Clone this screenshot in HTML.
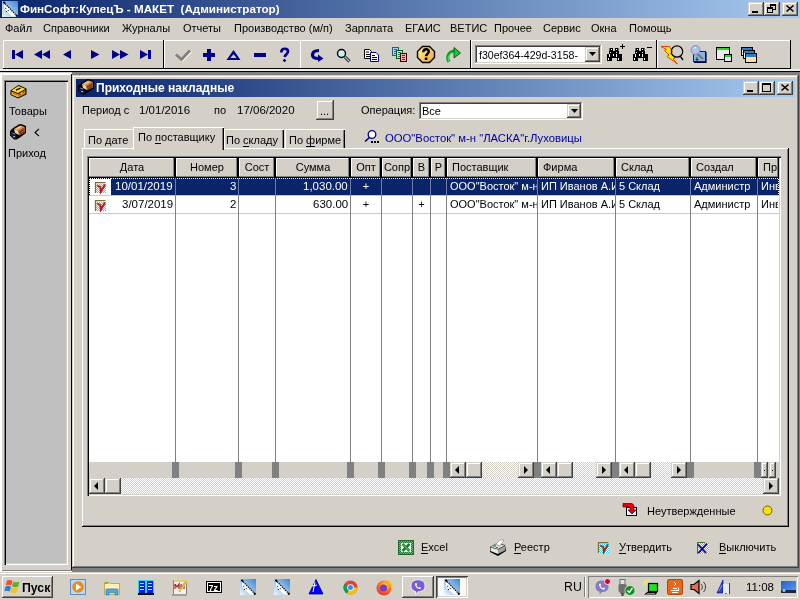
<!DOCTYPE html>
<html><head><meta charset="utf-8">
<style>
*{box-sizing:border-box;margin:0;padding:0}
html,body{width:800px;height:600px;overflow:hidden;background:#D4D0C8;font-family:"Liberation Sans",sans-serif;font-size:11px;color:#000}
.a{position:absolute}
.t{position:absolute;white-space:pre;font-size:11px;line-height:13px;will-change:transform}
.r{box-shadow:inset -1px -1px #404040,inset 1px 1px #fff,inset -2px -2px #808080,inset 2px 2px #D4D0C8;background:#D4D0C8}
.r1{box-shadow:inset -1px -1px #404040,inset 1px 1px #D4D0C8,inset -2px -2px #808080,inset 2px 2px #fff;background:#D4D0C8}
.s{box-shadow:inset -1px -1px #fff,inset 1px 1px #808080,inset -2px -2px #D4D0C8,inset 2px 2px #404040}
.tb{box-shadow:inset -1px -1px #000,inset 1px 1px #fff}
svg{position:absolute;overflow:visible}
u{text-decoration:none;border-bottom:1px solid #000}
</style></head><body>
<svg width="0" height="0" style="position:absolute"><defs>
<symbol id="plane" viewBox="0 0 16 16">
<linearGradient id="plg" x1="1" y1="0" x2="0" y2="1"><stop offset="0" stop-color="#3A86D4"/><stop offset="1" stop-color="#F0F8FF"/></linearGradient>
<rect width="16" height="16" fill="url(#plg)"/>
<path d="M1.5 1.5L15.5 15.5H10L4 10L2 7Z" fill="#fff"/>
<path d="M1.5 1L15.5 15.5" stroke="#000" stroke-width="1.2" stroke-dasharray="1.3 1"/>
<path d="M14 14L15.5 15.5M1.5 1L3 2.5" stroke="#000" stroke-width="1.8"/>
<path d="M3 7L5 8M4 10.5H6M6 9L7 11" stroke="#000" stroke-width="0.9" stroke-dasharray="1 1"/>
</symbol>
<symbol id="truck" viewBox="0 0 16 16">
<path d="M3 4L9.5 0L12.5 0.5L16 2V9L10 13.5L6.5 15.5H4L0 11.5V7L2 5Z" fill="#000"/>
<path d="M4 5L10 1.5L15 3L8.5 7Z" fill="#D89860"/>
<path d="M5 5L10 2L12 2.6L7 5.8Z" fill="#F0C088"/>
<path d="M4 5L8.5 7L9 11L5 9Z" fill="#F8D0A0"/>
<path d="M8.5 7L15 3V8.5L9 11.5Z" fill="#A86030"/>
<path d="M9 8.5L14.5 5.2M9.5 10.5L14.5 7.3" stroke="#601808" stroke-width="0.9"/>
<path d="M1 8L5 9L7 13.5L6 14.5H4L1 11.5Z" fill="#141A48"/>
<path d="M2.5 9.2L5 10" stroke="#7888D8" stroke-width="0.9"/>
<rect x="3.5" y="12" width="1.2" height="1.2" fill="#fff"/>
</symbol>
<symbol id="box" viewBox="0 0 17 15">
<path d="M0.5 6.5L8.5 1L16.5 4.5V10.5L8 14.5L0.5 11Z" fill="#000"/>
<path d="M1.5 6.5L8.5 2L15.5 5L8 9Z" fill="#FFD820"/>
<path d="M1.5 7.5L8 10V13.5L1.5 10.5Z" fill="#F8C010"/>
<path d="M8 10L15.5 6V10L8 13.5Z" fill="#D08018"/>
<path d="M6 6.2L10.5 4.2" stroke="#000" stroke-width="1.3"/>
<path d="M2.5 9L7.5 11M8.5 11L14.5 8" stroke="#904000" stroke-width="0.8"/>
<path d="M11 9.5L12.5 8.8" stroke="#FFF0D0" stroke-width="1"/>
</symbol>
</defs></svg>

<!-- main title bar -->
<div class="a" style="left:0;top:0;width:800px;height:18px;background:linear-gradient(to right,#0A246A,#A6CAF0)"></div>
<div class="t" style="left:20px;top:2px;font-size:11.65px;font-weight:bold;color:#fff;line-height:14px">ФинСофт:КупецЪ - МАКЕТ  (Администратор)</div>

<!-- menu -->
<div class="t" style="left:5px;top:22px">Файл</div>
<div class="t" style="left:43px;top:22px">Справочники</div>
<div class="t" style="left:122px;top:22px">Журналы</div>
<div class="t" style="left:183px;top:22px">Отчеты</div>
<div class="t" style="left:234px;top:22px">Производство (м/п)</div>
<div class="t" style="left:345px;top:22px">Зарплата</div>
<div class="t" style="left:405px;top:22px">ЕГАИС</div>
<div class="t" style="left:450px;top:22px">ВЕТИС</div>
<div class="t" style="left:494px;top:22px">Прочее</div>
<div class="t" style="left:543px;top:22px">Сервис</div>
<div class="t" style="left:591px;top:22px">Окна</div>
<div class="t" style="left:629px;top:22px">Помощь</div>

<!-- toolbars -->
<div class="a tb" style="left:3px;top:40px;width:161px;height:29px"></div>
<div class="a" style="left:164px;top:40px;width:136px;height:29px;box-shadow:inset 0 -1px #000,inset 1px 1px #fff"></div>
<div class="a tb" style="left:300px;top:40px;width:171px;height:29px"></div>
<div class="a tb" style="left:471px;top:40px;width:186px;height:29px"></div>
<div class="a tb" style="left:657px;top:40px;width:134px;height:29px"></div>


<!-- caption buttons main -->
<div class="a r1" style="left:748px;top:2px;width:16px;height:14px"></div>
<div class="a" style="left:752px;top:11px;width:6px;height:2px;background:#000"></div>
<div class="a r1" style="left:764px;top:2px;width:16px;height:14px"></div>
<div class="a" style="left:770px;top:4px;width:6px;height:6px;border:1px solid #000;border-top-width:2px"></div>
<div class="a" style="left:767px;top:7px;width:6px;height:6px;border:1px solid #000;border-top-width:2px;background:#D4D0C8"></div>
<div class="a r1" style="left:782px;top:2px;width:16px;height:14px"></div>
<svg style="left:786px;top:5px" width="8" height="7"><path d="M0.5 0.5L7.5 6.5M7.5 0.5L0.5 6.5" stroke="#000" stroke-width="1.6"/></svg>
<!-- app icon -->
<svg style="left:2px;top:1px" width="16" height="16"><use href="#plane"/></svg>

<!-- toolbar 1 icons -->
<svg style="left:0;top:0" width="800" height="70">
<g fill="#000088">
<rect x="12" y="50" width="3" height="9"/><path d="M15 54.5L23 50V59Z"/>
<path d="M34 54.5L42 50V59Z"/><path d="M42 54.5L50 50V59Z"/>
<path d="M63 54.5L71 50V59Z"/>
<path d="M91 50V59L99.5 54.5Z"/>
<path d="M112 50V59L120 54.5Z"/><path d="M120 50V59L128.5 54.5Z"/>
<path d="M140 50V59L148 54.5Z"/><rect x="148" y="50" width="3" height="9"/>
</g>
<path d="M176 54.5L181.5 59.5L190 50.5" stroke="#fff" stroke-width="2.6" fill="none" transform="translate(0.8,0.8)"/>
<path d="M176 54.5L181.5 59.5L190 50.5" stroke="#808080" stroke-width="2.8" fill="none"/>
<g fill="#000088">
<rect x="207" y="49" width="4" height="12"/><rect x="203" y="53" width="12" height="4"/>
<path d="M233.5 50L240.5 60H226.5Z M233.5 54.2L230.3 58H236.7Z" fill-rule="evenodd"/>
<rect x="254" y="53" width="12" height="4"/>
</g>
<path d="M281.3 52.5C281.3 49.8 282.8 48.8 284.8 48.8C286.8 48.8 288 50 288 51.6C288 53.8 285 54.5 284.6 57" stroke="#000088" stroke-width="2.6" fill="none"/><path d="M284.5 58.8L286.3 60.5L284.5 62.2L282.7 60.5Z" fill="#000088"/>
</svg>


<!-- toolbar 2-4 icons -->
<svg style="left:0;top:0" width="800" height="70">
<path d="M319 50.5C314 50.5 312.5 53 312.5 55C312.5 57.5 315 58.5 318 58.5" stroke="#000088" stroke-width="3.2" fill="none"/>
<path d="M318 54.5L323.5 58.5L318 62Z" fill="#000088"/>
<line x1="345" y1="57" x2="349.5" y2="61.5" stroke="#000" stroke-width="3"/>
<line x1="345" y1="57" x2="349.5" y2="61.5" stroke="#9ED8F0" stroke-width="1.2"/>
<circle cx="341.5" cy="53.5" r="4" fill="#C8F0FA" stroke="#000" stroke-width="1.4"/>
<path d="M364.5 49.5H369.5L371.5 51.5V58.5H364.5Z" fill="#fff" stroke="#000"/>
<path d="M366 52h3M366 54.5h4M366 56.5h4" stroke="#000"/>
<path d="M370.5 52.5H376L378.5 55V61.5H370.5Z" fill="#fff" stroke="#000088"/>
<path d="M372 55.5h3M372 57.5h5M372 59.5h5" stroke="#000"/>
<rect x="392.5" y="47.5" width="6" height="8" fill="#A8D0F0" stroke="#2A5A80"/>
<path d="M394 49.5h3M394 51.5h3M394 53.5h3" stroke="#2A70B0" stroke-width="1"/>
<rect x="396.5" y="50.5" width="6" height="8" fill="#B8F0B8" stroke="#0A5A20"/>
<path d="M398 52.5h3M398 54.5h3M398 56.5h3" stroke="#208040" stroke-width="1"/>
<rect x="400.5" y="53.5" width="6" height="8" fill="#F8B0B0" stroke="#400000"/>
<path d="M402 55.5h3M402 57.5h3M402 59.5h3" stroke="#A01010" stroke-width="1"/>
<defs><linearGradient id="octg" x1="0" y1="0" x2="1" y2="1"><stop offset="0" stop-color="#FFF8B0"/><stop offset="1" stop-color="#F0A030"/></linearGradient></defs>
<path d="M422.5 46.5H429.5L434.5 51.5V57.5L429.5 62.5H422.5L417.5 57.5V51.5Z" fill="url(#octg)" stroke="#000" stroke-width="1.4"/>
<path d="M423.3 52.3C423.3 50.3 424.5 49.3 426 49.3C427.8 49.3 428.8 50.3 428.8 51.6C428.8 53.5 426.2 54 426 56.2" stroke="#000" stroke-width="2.4" fill="none"/>
<rect x="424.8" y="57.5" width="2.5" height="2.5" fill="#000"/>
<path d="M449 62C446 57 448 51 456 51" stroke="#10A030" stroke-width="3" fill="none"/>
<path d="M449 62C447 58 448.5 53 455 52.5" stroke="#60E080" stroke-width="1" fill="none"/>
<path d="M454 47.5L460.5 53L454 58Z" fill="#20C040" stroke="#004000" stroke-width="0.8"/>
<g transform="translate(0,0)"><path d="M609.5 48H613V51H615V48H618.5V51H619V54H622V61H617V58H612V61H607V54H609V51H609.5Z" fill="#000"/>
<g fill="#fff"><rect x="611" y="49" width="1" height="1"/><rect x="616" y="49" width="1" height="1"/><rect x="610" y="52" width="1" height="1"/><rect x="616" y="52" width="1" height="1"/><rect x="609" y="54" width="1" height="3"/><rect x="613" y="54" width="1" height="2"/><rect x="616" y="54" width="1" height="3"/><rect x="608" y="58" width="1" height="2"/><rect x="618" y="58" width="1" height="2"/></g></g>
<path d="M620 46.5H625M622.5 44V49" stroke="#000" stroke-width="1"/>
<g transform="translate(26,0)"><path d="M609.5 48H613V51H615V48H618.5V51H619V54H622V61H617V58H612V61H607V54H609V51H609.5Z" fill="#000"/>
<g fill="#fff"><rect x="611" y="49" width="1" height="1"/><rect x="616" y="49" width="1" height="1"/><rect x="610" y="52" width="1" height="1"/><rect x="616" y="52" width="1" height="1"/><rect x="609" y="54" width="1" height="3"/><rect x="613" y="54" width="1" height="2"/><rect x="616" y="54" width="1" height="3"/><rect x="608" y="58" width="1" height="2"/><rect x="618" y="58" width="1" height="2"/></g></g>
<path d="M647 47.5H652" stroke="#000" stroke-width="1"/>
<path d="M661 46.5H669.5L672.5 52L670.5 53.5L675 58L673 59L677.5 64L667 56.5L669 55L664.5 50.5L666.5 49.5Z" fill="#FFE800" stroke="#E83000" stroke-width="0.9"/>
<circle cx="677" cy="51.5" r="5.7" fill="none" stroke="#000" stroke-width="1.2"/>
<path d="M680.5 56.5L683 60" stroke="#000" stroke-width="1.3"/>
<rect x="693.5" y="51.5" width="12" height="10" fill="#80B8E8" stroke="#102060"/>
<path d="M706 52V62.5H694" stroke="#000040" stroke-width="1.2" fill="none"/>
<path d="M697 57V61M695.5 59.5h3" stroke="#203040" stroke-width="1"/>
<line x1="697.5" y1="54" x2="703" y2="59" stroke="#907050" stroke-width="2.2"/>
<circle cx="695.5" cy="50" r="4.5" fill="#B0C0E8" stroke="#7080B8" stroke-width="0.8"/>
<path d="M693.5 49A2.5 2.5 0 0 1 696 47.5" stroke="#fff" stroke-width="0.8" fill="none"/>
<rect x="716.5" y="47.5" width="13" height="12" fill="#EEE" stroke="#000"/>
<rect x="717" y="48" width="12" height="2" fill="#30D030"/>
<rect x="724.5" y="54.5" width="7" height="7" fill="#E8E8F0" stroke="#000"/>
<rect x="725" y="55" width="6" height="2" fill="#30D030"/>
<rect x="741.5" y="47.5" width="11" height="8" fill="#FFF0D8" stroke="#000"/>
<rect x="742" y="48" width="10" height="2" fill="#3080C0"/>
<rect x="743.5" y="50.5" width="11" height="8" fill="#FFF0D8" stroke="#000"/>
<rect x="744" y="51" width="10" height="2" fill="#3080C0"/>
<rect x="745.5" y="53.5" width="11" height="9" fill="#FFE0A8" stroke="#000"/>
<rect x="746" y="54" width="10" height="3" fill="#3080C0"/>
</svg>
<!-- combo on toolbar -->
<div class="a s" style="left:475px;top:45px;width:127px;height:19px;background:#fff"></div>
<div class="t" style="left:478.5px;top:49px;font-size:10.6px;width:106px;overflow:hidden">f30ef364-429d-3158-</div>
<div class="a r1" style="left:585px;top:47px;width:15px;height:15px"></div>
<svg style="left:589px;top:52px" width="7" height="4"><path d="M0 0H7L3.5 4Z" fill="#000"/></svg>

<!-- MDI lines -->
<div class="a" style="left:0;top:69px;width:800px;height:2px;background:#F0EEEA"></div>
<div class="a" style="left:0;top:71px;width:800px;height:1px;background:#000"></div>
<div class="a" style="left:0;top:72px;width:800px;height:1px;background:#808080"></div>

<!-- left panel -->
<div class="a" style="left:0;top:72px;width:72px;height:500px;background:#D4D0C8;box-shadow:inset 0 1px #D4D0C8,inset 0 3px #fff,inset 2px 0 #fff,inset 1px 0 #D4D0C8,inset 0 -1px #fff,inset 0 -2px #808080"></div>
<div class="a" style="left:4px;top:80px;width:64px;height:485px;background:#C0C0C0;box-shadow:inset 1px 1px #808080,inset 2px 2px #000,inset -1px -1px #fff,inset -2px -2px #D4D0C8"></div>

<!-- child window -->
<div class="a" style="left:71px;top:74px;width:1px;height:496px;background:#000"></div>
<div class="a" style="left:72px;top:75px;width:727px;height:493px;background:#D4D0C8;box-shadow:inset -1px -1px #404040,inset 1px 1px #D4D0C8,inset -2px -2px #808080,inset 2px 2px #fff"></div>
<div class="a" style="left:72px;top:568px;width:728px;height:4px;background:#808080"></div>
<div class="a" style="left:799px;top:72px;width:1px;height:500px;background:#808080"></div>
<div class="a" style="left:72px;top:72px;width:728px;height:3px;background:#808080"></div>
<div class="a" style="left:76px;top:79px;width:719px;height:18px;background:linear-gradient(to right,#0A246A,#A6CAF0)"></div>
<svg style="left:78px;top:79px" width="16" height="16"><use href="#truck"/></svg>
<div class="t" style="left:96px;top:81px;font-size:12px;font-weight:bold;color:#fff;line-height:14px">Приходные накладные</div>


<!-- child caption buttons -->
<div class="a r1" style="left:743px;top:81px;width:16px;height:14px"></div>
<div class="a" style="left:747px;top:90px;width:6px;height:2px;background:#000"></div>
<div class="a r1" style="left:759px;top:81px;width:16px;height:14px"></div>
<div class="a" style="left:762px;top:83px;width:9px;height:9px;border:1px solid #000;border-top-width:2px"></div>
<div class="a r1" style="left:777px;top:81px;width:16px;height:14px"></div>
<svg style="left:781px;top:84px" width="8" height="7"><path d="M0.5 0.5L7.5 6.5M7.5 0.5L0.5 6.5" stroke="#000" stroke-width="1.6"/></svg>

<!-- period row -->
<div class="t" style="left:82px;top:104px">Период с</div>
<div class="t" style="left:139px;top:104px;font-size:11.5px">1/01/2016</div>
<div class="t" style="left:214px;top:104px">по</div>
<div class="t" style="left:237px;top:104px;font-size:11.5px">17/06/2020</div>
<div class="a r1" style="left:316px;top:100px;width:18px;height:20px"></div>
<div class="t" style="left:320px;top:105px">...</div>
<div class="t" style="left:361px;top:104px">Операция:</div>
<div class="a s" style="left:419px;top:102px;width:164px;height:18px;background:#fff"></div>
<div class="t" style="left:422px;top:105px">Все</div>
<div class="a r1" style="left:567px;top:104px;width:14px;height:14px"></div>
<svg style="left:571px;top:109px" width="7" height="4"><path d="M0 0H7L3.5 4Z" fill="#000"/></svg>

<!-- tab panel -->
<div class="a" style="left:82px;top:148px;width:707px;height:379px;box-shadow:inset -1px -1px #000,inset 1px 1px #fff,inset -2px -2px #808080"></div>
<!-- tabs -->
<div class="a" style="left:84px;top:129px;width:49px;height:19px;background:#D4D0C8;box-shadow:inset 1px 1px #fff"></div>
<div class="a" style="left:224px;top:129px;width:60px;height:19px;background:#D4D0C8;box-shadow:inset 1px 1px #fff,inset -1px 0 #000,inset -2px 0 #808080"></div>
<div class="a" style="left:285px;top:129px;width:60px;height:19px;background:#D4D0C8;box-shadow:inset 1px 1px #fff,inset -1px 0 #000,inset -2px 0 #808080"></div>
<div class="a" style="left:133px;top:127px;width:91px;height:23px;background:#D4D0C8;box-shadow:inset 1px 1px #fff,inset -1px 0 #000,inset -2px 0 #808080"></div>
<div class="t" style="left:88px;top:134px">По дате</div>
<div class="t" style="left:138px;top:131px">По <u>п</u>оставщику</div>
<div class="t" style="left:226px;top:134px">По <u>с</u>кладу</div>
<div class="t" style="left:289px;top:134px">По <u>ф</u>ирме</div>
<svg style="left:364px;top:130px" width="15" height="13"><circle cx="8" cy="4.5" r="3.8" fill="#fff" stroke="#00008B" stroke-width="1.3"/><path d="M5.5 7.5L1 11.5" stroke="#00008B" stroke-width="1.6"/><rect x="7" y="11" width="2" height="2" fill="#000"/><rect x="10" y="11" width="2" height="2" fill="#000"/><rect x="13" y="11" width="2" height="2" fill="#000"/></svg>
<div class="t" style="left:385px;top:132px;color:#0000A0;font-size:11.3px">ООО"Восток" м-н "ЛАСКА"г.Луховицы</div>

<!-- grid start -->
<div class="a" style="left:87px;top:156px;width:694px;height:340px;background:#fff;box-shadow:inset 1px 1px #808080,inset 2px 2px #000,inset -1px -1px #fff,inset -2px -2px #D4D0C8"></div>
<div class="a" style="left:89px;top:158px;width:87px;height:20px;overflow:hidden;background:#D4D0C8;box-shadow:inset -2px 0 #000,inset 0 -1px #000,inset -3px 0 #808080,inset 0 -2px #808080,inset 1px 1px #fff">
<div class="t" style="left:0;width:86px;text-align:center;top:3px">Дата</div></div>
<div class="a" style="left:176px;top:158px;width:63px;height:20px;overflow:hidden;background:#D4D0C8;box-shadow:inset -2px 0 #000,inset 0 -1px #000,inset -3px 0 #808080,inset 0 -2px #808080,inset 1px 1px #fff">
<div class="t" style="left:0;width:62px;text-align:center;top:3px">Номер</div></div>
<div class="a" style="left:239px;top:158px;width:37px;height:20px;overflow:hidden;background:#D4D0C8;box-shadow:inset -2px 0 #000,inset 0 -1px #000,inset -3px 0 #808080,inset 0 -2px #808080,inset 1px 1px #fff">
<div class="t" style="left:0;width:36px;text-align:center;top:3px">Сост</div></div>
<div class="a" style="left:276px;top:158px;width:75px;height:20px;overflow:hidden;background:#D4D0C8;box-shadow:inset -2px 0 #000,inset 0 -1px #000,inset -3px 0 #808080,inset 0 -2px #808080,inset 1px 1px #fff">
<div class="t" style="left:0;width:74px;text-align:center;top:3px">Сумма</div></div>
<div class="a" style="left:351px;top:158px;width:31px;height:20px;overflow:hidden;background:#D4D0C8;box-shadow:inset -2px 0 #000,inset 0 -1px #000,inset -3px 0 #808080,inset 0 -2px #808080,inset 1px 1px #fff">
<div class="t" style="left:0;width:30px;text-align:center;top:3px">Опт</div></div>
<div class="a" style="left:382px;top:158px;width:31px;height:20px;overflow:hidden;background:#D4D0C8;box-shadow:inset -2px 0 #000,inset 0 -1px #000,inset -3px 0 #808080,inset 0 -2px #808080,inset 1px 1px #fff">
<div class="t" style="left:0;width:30px;text-align:center;top:3px">Сопр</div></div>
<div class="a" style="left:413px;top:158px;width:18px;height:20px;overflow:hidden;background:#D4D0C8;box-shadow:inset -2px 0 #000,inset 0 -1px #000,inset -3px 0 #808080,inset 0 -2px #808080,inset 1px 1px #fff">
<div class="t" style="left:0;width:17px;text-align:center;top:3px">В</div></div>
<div class="a" style="left:431px;top:158px;width:16px;height:20px;overflow:hidden;background:#D4D0C8;box-shadow:inset -2px 0 #000,inset 0 -1px #000,inset -3px 0 #808080,inset 0 -2px #808080,inset 1px 1px #fff">
<div class="t" style="left:0;width:15px;text-align:center;top:3px">Р</div></div>
<div class="a" style="left:447px;top:158px;width:91px;height:20px;overflow:hidden;background:#D4D0C8;box-shadow:inset -2px 0 #000,inset 0 -1px #000,inset -3px 0 #808080,inset 0 -2px #808080,inset 1px 1px #fff">
<div class="t" style="left:5px;top:3px">Поставщик</div></div>
<div class="a" style="left:538px;top:158px;width:78px;height:20px;overflow:hidden;background:#D4D0C8;box-shadow:inset -2px 0 #000,inset 0 -1px #000,inset -3px 0 #808080,inset 0 -2px #808080,inset 1px 1px #fff">
<div class="t" style="left:5px;top:3px">Фирма</div></div>
<div class="a" style="left:616px;top:158px;width:75px;height:20px;overflow:hidden;background:#D4D0C8;box-shadow:inset -2px 0 #000,inset 0 -1px #000,inset -3px 0 #808080,inset 0 -2px #808080,inset 1px 1px #fff">
<div class="t" style="left:5px;top:3px">Склад</div></div>
<div class="a" style="left:691px;top:158px;width:67px;height:20px;overflow:hidden;background:#D4D0C8;box-shadow:inset -2px 0 #000,inset 0 -1px #000,inset -3px 0 #808080,inset 0 -2px #808080,inset 1px 1px #fff">
<div class="t" style="left:5px;top:3px">Создал</div></div>
<div class="a" style="left:758px;top:158px;width:21px;height:20px;overflow:hidden;background:#D4D0C8;box-shadow:inset -1px 0 #000,inset 0 -1px #000,inset -2px 0 #808080,inset 0 -2px #808080,inset 1px 1px #fff">
<div class="t" style="left:5px;top:3px">Пр</div></div>
<div class="a" style="left:111px;top:179px;width:668px;height:16px;background:#0A246A"></div>
<div class="a" style="left:89px;top:178px;width:690px;height:1px;background:repeating-linear-gradient(to right,#000 0 1px,#fff 1px 2px)"></div>
<div class="a" style="left:111px;top:178px;width:667px;height:1px;background:repeating-linear-gradient(to right,#fff 0 1px,#0A246A 1px 2px)"></div>
<div class="a" style="left:778px;top:178px;width:1px;height:17px;background:repeating-linear-gradient(to bottom,#000 0 1px,#fff 1px 2px)"></div>
<div class="a" style="left:776px;top:462px;width:3px;height:16px;background:repeating-conic-gradient(#fff 0 25%,#D4D0C8 0 50%) 0 0/2px 2px"></div>
<div class="a" style="left:89px;top:178px;width:1px;height:17px;background:repeating-linear-gradient(to bottom,#000 0 1px,#fff 1px 2px)"></div>
<div class="a" style="left:89px;top:195px;width:690px;height:1px;background:#C8C8C8"></div>
<div class="a" style="left:89px;top:213px;width:690px;height:1px;background:#C8C8C8"></div>
<div class="a" style="left:175px;top:178px;width:1px;height:284px;background:#808080"></div>
<div class="a" style="left:175px;top:179px;width:1px;height:16px;background:#6A7CA8"></div>
<div class="a" style="left:238px;top:178px;width:1px;height:284px;background:#808080"></div>
<div class="a" style="left:238px;top:179px;width:1px;height:16px;background:#6A7CA8"></div>
<div class="a" style="left:275px;top:178px;width:1px;height:284px;background:#808080"></div>
<div class="a" style="left:275px;top:179px;width:1px;height:16px;background:#6A7CA8"></div>
<div class="a" style="left:350px;top:178px;width:1px;height:284px;background:#808080"></div>
<div class="a" style="left:350px;top:179px;width:1px;height:16px;background:#6A7CA8"></div>
<div class="a" style="left:381px;top:178px;width:1px;height:284px;background:#808080"></div>
<div class="a" style="left:381px;top:179px;width:1px;height:16px;background:#6A7CA8"></div>
<div class="a" style="left:412px;top:178px;width:1px;height:284px;background:#808080"></div>
<div class="a" style="left:412px;top:179px;width:1px;height:16px;background:#6A7CA8"></div>
<div class="a" style="left:430px;top:178px;width:1px;height:284px;background:#808080"></div>
<div class="a" style="left:430px;top:179px;width:1px;height:16px;background:#6A7CA8"></div>
<div class="a" style="left:446px;top:178px;width:1px;height:284px;background:#808080"></div>
<div class="a" style="left:446px;top:179px;width:1px;height:16px;background:#6A7CA8"></div>
<div class="a" style="left:537px;top:178px;width:1px;height:284px;background:#808080"></div>
<div class="a" style="left:537px;top:179px;width:1px;height:16px;background:#6A7CA8"></div>
<div class="a" style="left:615px;top:178px;width:1px;height:284px;background:#808080"></div>
<div class="a" style="left:615px;top:179px;width:1px;height:16px;background:#6A7CA8"></div>
<div class="a" style="left:690px;top:178px;width:1px;height:284px;background:#808080"></div>
<div class="a" style="left:690px;top:179px;width:1px;height:16px;background:#6A7CA8"></div>
<div class="a" style="left:757px;top:178px;width:1px;height:284px;background:#808080"></div>
<div class="a" style="left:757px;top:179px;width:1px;height:16px;background:#6A7CA8"></div>
<div class="a" style="left:89px;top:180px;width:86px;height:15px;overflow:hidden"><div class="t" style="right:2px;top:0;color:#fff;font-size:11.5px">10/01/2019</div></div>
<div class="a" style="left:176px;top:180px;width:62px;height:15px;overflow:hidden"><div class="t" style="right:2px;top:0;color:#fff;font-size:11.5px">3</div></div>
<div class="a" style="left:276px;top:180px;width:74px;height:15px;overflow:hidden"><div class="t" style="right:2px;top:0;color:#fff;font-size:11.5px">1,030.00</div></div>
<div class="a" style="left:351px;top:180px;width:30px;height:15px;overflow:hidden"><div class="t" style="left:0;width:30px;text-align:center;top:0;color:#fff;font-size:11px">+</div></div>
<div class="a" style="left:447px;top:180px;width:90px;height:15px;overflow:hidden"><div class="t" style="left:3px;top:0;color:#fff;font-size:11px">ООО"Восток" м-н "ЛАСКА"</div></div>
<div class="a" style="left:538px;top:180px;width:77px;height:15px;overflow:hidden"><div class="t" style="left:3px;top:0;color:#fff;font-size:11px">ИП Иванов А.И.</div></div>
<div class="a" style="left:616px;top:180px;width:74px;height:15px;overflow:hidden"><div class="t" style="left:3px;top:0;color:#fff;font-size:11px">5 Склад</div></div>
<div class="a" style="left:691px;top:180px;width:66px;height:15px;overflow:hidden"><div class="t" style="left:3px;top:0;color:#fff;font-size:11px">Администр</div></div>
<div class="a" style="left:758px;top:180px;width:20px;height:15px;overflow:hidden"><div class="t" style="left:3px;top:0;color:#fff;font-size:11px">Инвентаризация</div></div>
<div class="a" style="left:89px;top:198px;width:86px;height:15px;overflow:hidden"><div class="t" style="right:2px;top:0;color:#000;font-size:11.5px">3/07/2019</div></div>
<div class="a" style="left:176px;top:198px;width:62px;height:15px;overflow:hidden"><div class="t" style="right:2px;top:0;color:#000;font-size:11.5px">2</div></div>
<div class="a" style="left:276px;top:198px;width:74px;height:15px;overflow:hidden"><div class="t" style="right:2px;top:0;color:#000;font-size:11.5px">630.00</div></div>
<div class="a" style="left:351px;top:198px;width:30px;height:15px;overflow:hidden"><div class="t" style="left:0;width:30px;text-align:center;top:0;color:#000;font-size:11px">+</div></div>
<div class="a" style="left:413px;top:198px;width:17px;height:15px;overflow:hidden"><div class="t" style="left:0;width:17px;text-align:center;top:0;color:#000;font-size:11px">+</div></div>
<div class="a" style="left:447px;top:198px;width:90px;height:15px;overflow:hidden"><div class="t" style="left:3px;top:0;color:#000;font-size:11px">ООО"Восток" м-н "ЛАСКА"</div></div>
<div class="a" style="left:538px;top:198px;width:77px;height:15px;overflow:hidden"><div class="t" style="left:3px;top:0;color:#000;font-size:11px">ИП Иванов А.И.</div></div>
<div class="a" style="left:616px;top:198px;width:74px;height:15px;overflow:hidden"><div class="t" style="left:3px;top:0;color:#000;font-size:11px">5 Склад</div></div>
<div class="a" style="left:691px;top:198px;width:66px;height:15px;overflow:hidden"><div class="t" style="left:3px;top:0;color:#000;font-size:11px">Администр</div></div>
<div class="a" style="left:758px;top:198px;width:20px;height:15px;overflow:hidden"><div class="t" style="left:3px;top:0;color:#000;font-size:11px">Инвентаризация</div></div>
<svg style="left:95px;top:182px" width="11" height="11"><defs><pattern id="ck0" width="2" height="2" patternUnits="userSpaceOnUse"><rect width="2" height="2" fill="#fff"/><rect width="1" height="1" fill="#40D0E0"/><rect x="1" y="1" width="1" height="1" fill="#40D0E0"/></pattern></defs><rect x="1" y="2" width="10" height="9" fill="url(#ck0)"/><path d="M0.5 11V0.7H10.5" stroke="#807030" stroke-width="1.3" fill="none"/><path d="M2.3 3.5L5.3 5L5.8 9.8L10 2.5" stroke="#B81818" stroke-width="1.9" fill="none"/></svg>
<svg style="left:95px;top:200px" width="11" height="11"><defs><pattern id="ck1" width="2" height="2" patternUnits="userSpaceOnUse"><rect width="2" height="2" fill="#fff"/><rect width="1" height="1" fill="#40D0E0"/><rect x="1" y="1" width="1" height="1" fill="#40D0E0"/></pattern></defs><rect x="1" y="2" width="10" height="9" fill="url(#ck1)"/><path d="M0.5 11V0.7H10.5" stroke="#807030" stroke-width="1.3" fill="none"/><path d="M2.3 3.5L5.3 5L5.8 9.8L10 2.5" stroke="#B81818" stroke-width="1.9" fill="none"/></svg>
<div class="a" style="left:89px;top:462px;width:690px;height:16px;background:#D4D0C8"></div>
<div class="a" style="left:172px;top:462px;width:7px;height:16px;background:#808080"></div>
<div class="a" style="left:235px;top:462px;width:7px;height:16px;background:#808080"></div>
<div class="a" style="left:272px;top:462px;width:7px;height:16px;background:#808080"></div>
<div class="a" style="left:347px;top:462px;width:7px;height:16px;background:#808080"></div>
<div class="a" style="left:378px;top:462px;width:7px;height:16px;background:#808080"></div>
<div class="a" style="left:409px;top:462px;width:7px;height:16px;background:#808080"></div>
<div class="a" style="left:427px;top:462px;width:7px;height:16px;background:#808080"></div>
<div class="a" style="left:443px;top:462px;width:7px;height:16px;background:#808080"></div>
<div class="a" style="left:534px;top:462px;width:7px;height:16px;background:#808080"></div>
<div class="a" style="left:612px;top:462px;width:7px;height:16px;background:#808080"></div>
<div class="a" style="left:687px;top:462px;width:7px;height:16px;background:#808080"></div>
<div class="a" style="left:754px;top:462px;width:7px;height:16px;background:#808080"></div>
<div class="a" style="left:450px;top:462px;width:84px;height:16px;background:repeating-conic-gradient(#fff 0 25%,#D4D0C8 0 50%) 0 0/2px 2px"></div><div class="a r1" style="left:450px;top:462px;width:16px;height:16px"></div><svg style="left:455px;top:466px" width="4" height="8"><path d="M4 0V8L0 4Z" fill="#000"/></svg><div class="a r1" style="left:466px;top:462px;width:16px;height:16px"></div><div class="a r1" style="left:518px;top:462px;width:16px;height:16px"></div><svg style="left:524px;top:466px" width="4" height="8"><path d="M0 0V8L4 4Z" fill="#000"/></svg>
<div class="a" style="left:541px;top:462px;width:71px;height:16px;background:repeating-conic-gradient(#fff 0 25%,#D4D0C8 0 50%) 0 0/2px 2px"></div><div class="a r1" style="left:541px;top:462px;width:16px;height:16px"></div><svg style="left:546px;top:466px" width="4" height="8"><path d="M4 0V8L0 4Z" fill="#000"/></svg><div class="a r1" style="left:557px;top:462px;width:16px;height:16px"></div><div class="a r1" style="left:596px;top:462px;width:16px;height:16px"></div><svg style="left:602px;top:466px" width="4" height="8"><path d="M0 0V8L4 4Z" fill="#000"/></svg>
<div class="a" style="left:619px;top:462px;width:68px;height:16px;background:repeating-conic-gradient(#fff 0 25%,#D4D0C8 0 50%) 0 0/2px 2px"></div><div class="a r1" style="left:619px;top:462px;width:16px;height:16px"></div><svg style="left:624px;top:466px" width="4" height="8"><path d="M4 0V8L0 4Z" fill="#000"/></svg><div class="a r1" style="left:635px;top:462px;width:16px;height:16px"></div><div class="a r1" style="left:671px;top:462px;width:16px;height:16px"></div><svg style="left:677px;top:466px" width="4" height="8"><path d="M0 0V8L4 4Z" fill="#000"/></svg>
<div class="a r1" style="left:761px;top:462px;width:7px;height:16px"></div><div class="a" style="left:764px;top:470px;width:1px;height:1px;background:#000"></div>
<div class="a r1" style="left:769px;top:462px;width:7px;height:16px"></div><div class="a" style="left:772px;top:470px;width:1px;height:1px;background:#000"></div>
<div class="a" style="left:89px;top:478px;width:690px;height:16px;background:repeating-conic-gradient(#fff 0 25%,#D4D0C8 0 50%) 0 0/2px 2px"></div>
<div class="a r1" style="left:89px;top:478px;width:16px;height:16px"></div><svg style="left:94px;top:482px" width="4" height="8"><path d="M4 0V8L0 4Z" fill="#000"/></svg><div class="a r1" style="left:105px;top:478px;width:16px;height:16px"></div><div class="a r1" style="left:763px;top:478px;width:16px;height:16px"></div><svg style="left:769px;top:482px" width="4" height="8"><path d="M0 0V8L4 4Z" fill="#000"/></svg>
<!-- grid end -->

<!-- left panel content -->
<svg style="left:10px;top:84px" width="17" height="15"><use href="#box"/></svg>
<div class="t" style="left:9px;top:105px">Товары</div>
<svg style="left:10px;top:124px" width="16" height="16"><use href="#truck"/></svg>
<svg style="left:34px;top:128px" width="6" height="10"><path d="M5 0.8L1 4.5L5 8.2" stroke="#000" stroke-width="1.1" fill="none"/></svg>
<div class="t" style="left:8px;top:147px">Приход</div>

<!-- status row -->
<svg style="left:623px;top:503px" width="15" height="14">
<rect x="3.5" y="4.5" width="10" height="8" fill="#fff" stroke="#000"/>
<path d="M0 0.5H8C10 0.5 11 2 11 4V7H13L9 11L5 7H7V4H0Z" fill="#F00000" stroke="#200040" stroke-width="0.7"/>
</svg>
<div class="t" style="left:647px;top:505px">Неутвержденные</div>
<svg style="left:762px;top:505px" width="11" height="11"><circle cx="5.5" cy="5.5" r="4.5" fill="#F8E000" stroke="#806000" stroke-width="1"/></svg>

<!-- button row -->
<svg style="left:398px;top:540px" width="16" height="15">
<defs><pattern id="gck" width="2" height="2" patternUnits="userSpaceOnUse"><rect width="2" height="2" fill="#1E7A30"/><rect width="1" height="1" fill="#70B880"/><rect x="1" y="1" width="1" height="1" fill="#70B880"/></pattern></defs>
<rect x="0" y="0" width="16" height="15" fill="#1E6A2A"/>
<rect x="1" y="1" width="14" height="13" fill="url(#gck)"/>
<rect x="3" y="3" width="10" height="9" fill="#F0FFF0"/>
<path d="M4.5 4L11.5 11M11.5 4L4.5 11" stroke="#1E7A30" stroke-width="2.6"/>
<path d="M5 4.5L11 10.5" stroke="#C0E8C0" stroke-width="0.7"/>
</svg>
<div class="t" style="left:421px;top:541px"><u>E</u>xcel</div>
<svg style="left:488px;top:539px" width="20" height="18">
<path d="M2 8L9 4L17 6L18 12L10 17L2 13Z" fill="#000"/>
<path d="M2.5 8L9 4.5L17 6.5L10 10Z" fill="#D8D8D8"/>
<path d="M2.5 8.5L10 10.5V15L2.5 12Z" fill="#E8E8E8"/>
<path d="M10 10.5L17 7V11.5L10 15Z" fill="#A0A0A0"/>
<path d="M8 5L12 1H16L12 7Z" fill="#fff" stroke="#808080" stroke-width="0.6"/>
<rect x="5" y="6" width="3" height="2" fill="#40C060"/><rect x="8" y="8" width="2" height="1" fill="#C04040"/>
</svg>
<div class="t" style="left:514px;top:541px"><u>Р</u>еестр</div>
<svg style="left:598px;top:542px" width="11" height="11"><defs><pattern id="ck5" width="2" height="2" patternUnits="userSpaceOnUse"><rect width="2" height="2" fill="#fff"/><rect width="1" height="1" fill="#40D0E0"/><rect x="1" y="1" width="1" height="1" fill="#40D0E0"/></pattern></defs><rect x="1" y="2" width="10" height="9" fill="url(#ck5)"/><path d="M0.5 11V0.7H10.5" stroke="#807030" stroke-width="1.3" fill="none"/><path d="M2.3 3.5L5.3 5L5.8 9.8L10 2.5" stroke="#B81818" stroke-width="1.9" fill="none"/></svg>
<div class="t" style="left:619px;top:541px"><u>У</u>твердить</div>
<svg style="left:697px;top:542px" width="13" height="13">
<defs><pattern id="ck6" width="2" height="2" patternUnits="userSpaceOnUse"><rect width="2" height="2" fill="#fff"/><rect width="1" height="1" fill="#3CC8D8"/><rect x="1" y="1" width="1" height="1" fill="#3CC8D8"/></pattern></defs>
<rect x="1" y="1" width="11" height="11" fill="url(#ck6)"/><path d="M0.5 12V0.5H8" stroke="#407020" fill="none"/>
<path d="M1 2.5L9 11M10 1.5L1.5 11" stroke="#000088" stroke-width="1.8"/>
</svg>
<div class="t" style="left:719px;top:541px"><u>В</u>ыключить</div>

<!-- taskbar -->
<div class="a" style="left:0;top:572px;width:800px;height:28px;background:#D4D0C8"></div>


<div class="a" style="left:0;top:573px;width:800px;height:1px;background:#fff"></div>
<!-- start button -->
<div class="a r" style="left:2px;top:576px;width:51px;height:22px"></div>
<svg style="left:4px;top:579px" width="17" height="15">
<path d="M3 1.5C5 0.5 7 0.8 8.5 2L7.2 6.8C5.5 5.6 3.6 5.6 1.8 6.5Z" fill="#F05020"/>
<path d="M9.3 2.4C11 3.6 13 3.7 15.5 2.4L14.2 7.6C11.8 8.6 9.8 8.4 8 7.2Z" fill="#60B030"/>
<path d="M1.6 7.4C3.4 6.5 5.3 6.5 7 7.7L5.7 12.6C4 11.4 2 11.4 0.3 12.3Z" fill="#2A80D0"/>
<path d="M7.8 8.1C9.6 9.3 11.6 9.5 14 8.5L12.7 13.6C10.3 14.6 8.3 14.4 6.5 13.1Z" fill="#F8C020"/>
</svg>
<div class="t" style="left:21.5px;top:582px;font-weight:bold;font-size:12.3px;color:#000">Пуск</div>

<!-- quick launch -->
<svg style="left:0;top:570px" width="800" height="30">
<rect x="70.5" y="9.5" width="15" height="15" fill="#B8D8F8" stroke="#5A90C8"/>
<circle cx="78" cy="17" r="5.8" fill="#F08A10"/>
<path d="M76 13.5V20.5L81.5 17Z" fill="#fff"/>
<path d="M104.5 12.5H109L110.5 13.5H119.5V24.5H104.5Z" fill="#F0DC90" stroke="#C8A848"/>
<rect x="105" y="14" width="14" height="4" fill="#FAF0C0"/>
<rect x="105" y="12" width="3" height="2" fill="#70C050"/>
<path d="M106 25V20.5C106 19.5 106.5 19 107.5 19H116.5C117.5 19 118 19.5 118 20.5V25H115V22.5H109V25Z" fill="#48A8E8" stroke="#2878C0" stroke-width="0.6"/>
<rect x="138" y="10" width="16" height="14" fill="#30D8F0"/>
<rect x="139" y="11" width="6" height="12" fill="#0020E0"/><rect x="147" y="11" width="6" height="12" fill="#0020E0"/>
<path d="M140 13.5h4M140 16.5h4M140 19.5h4M148 13.5h4M148 16.5h4M148 19.5h4" stroke="#B8D8FF" stroke-width="1"/>
<rect x="138" y="23" width="16" height="2" fill="#000"/>
<path d="M173.5 10.5H186.5V24.5H173.5Z" fill="#F4F0E8" stroke="#808080"/>
<rect x="174" y="10" width="13" height="2" fill="#E8D070"/>
<path d="M175 14v5M175 14l2 3l2-3v5M181 14v5l3-5v5" stroke="#A02020" stroke-width="1.2" fill="none"/>
<path d="M179 22L187 11" stroke="#E0C040" stroke-width="2"/>
<rect x="172" y="24" width="15" height="2" fill="#A0A0A0"/>
<rect x="206" y="11" width="16" height="12" fill="#000"/>
<rect x="207" y="12" width="14" height="10" fill="#fff"/>
<rect x="208" y="13" width="12" height="8" fill="#000"/>
<text x="208.5" y="20.5" font-family="Liberation Sans" font-weight="bold" font-size="9" fill="#fff">7z</text>
</svg>
<svg style="left:240px;top:579px" width="16" height="16"><use href="#plane"/></svg>
<svg style="left:274px;top:579px" width="16" height="16"><use href="#plane"/></svg>
<svg style="left:308px;top:579px" width="16" height="16"><path d="M8 0.5L15 15H1Z" fill="#0000F0" stroke="#000080" stroke-width="0.8"/><path d="M7 3L5 13M4 7L9 6" stroke="#fff" stroke-width="1"/></svg>
<svg style="left:343px;top:580px" width="15" height="15">
<circle cx="7.5" cy="7.5" r="7" fill="#DB4437"/>
<path d="M7.5 7.5L1.44 4A7 7 0 0 0 4 13.56Z" fill="#0F9D58"/>
<path d="M7.5 7.5L4 13.56A7 7 0 0 0 14.5 7.5Z" fill="#F4C20D"/>
<circle cx="7.5" cy="7.5" r="3.3" fill="#fff"/><circle cx="7.5" cy="7.5" r="2.5" fill="#4285F4"/>
</svg>
<svg style="left:376px;top:579px" width="17" height="17">
<defs><radialGradient id="ff" cx="0.6" cy="0.3" r="0.8"><stop offset="0" stop-color="#FFD030"/><stop offset="0.5" stop-color="#FF7020"/><stop offset="1" stop-color="#E02050"/></radialGradient></defs>
<circle cx="8" cy="9" r="7.5" fill="url(#ff)"/>
<circle cx="7.5" cy="9" r="3.5" fill="#7040C0"/>
<path d="M11 1C14 3 16 6 15.5 9" stroke="#FFC020" stroke-width="2" fill="none"/>
</svg>

<!-- task buttons -->
<div class="a r" style="left:402px;top:576px;width:32px;height:22px"></div>
<svg style="left:410px;top:579px" width="16" height="16"><path d="M8 0.8C12.5 0.8 15 3 15 7C15 11 12.5 12.5 8 12.8L5.5 15.2V12.5C2 11.5 1 9.5 1 7C1 3 3.5 0.8 8 0.8Z" fill="#7B5CD6" stroke="#fff" stroke-width="0.8"/><path d="M5 4.5C5 8 7.5 10 10.5 10L11 8.8L9.5 8L8.8 8.8C7.5 8.3 6.8 7.5 6.4 6.3L7.2 5.6L6.4 4L5.5 4.2Z" fill="#fff"/></svg>
<div class="a" style="left:436px;top:576px;width:32px;height:22px;background:repeating-conic-gradient(#fff 0 25%,#F4F2EE 0 50%) 0 0/2px 2px;box-shadow:inset 1px 1px #404040,inset -1px -1px #fff,inset 2px 2px #808080,inset -2px -2px #D4D0C8"></div>
<svg style="left:444px;top:579px" width="16" height="16"><use href="#plane"/></svg>

<!-- lang + tray -->
<div class="t" style="left:564px;top:581px;font-size:12.3px">RU</div>
<div class="a" style="left:584px;top:577px;width:1px;height:20px;background:#808080"></div>
<div class="a" style="left:585px;top:577px;width:1px;height:20px;background:#fff"></div>
<div class="a" style="left:588px;top:576px;width:210px;height:22px;box-shadow:inset 1px 1px #808080,inset -1px -1px #fff"></div>
<svg style="left:594px;top:578px" width="18" height="18">
<path d="M8 2.5C12 2.5 14.5 4.5 14.5 8.5C14.5 12.5 12 14 8 14L5.5 16.5V13.8C2.5 13 1.5 11 1.5 8.5C1.5 4.5 4 2.5 8 2.5Z" fill="#8878C8"/>
<path d="M5 6C5 9.5 7.5 11.5 10.5 11.5L11 10.3L9.5 9.5L8.8 10.3C7.5 9.8 6.8 9 6.4 7.8L7.2 7.1L6.4 5.5L5.5 5.7Z" fill="#fff"/>
<circle cx="13.5" cy="3.5" r="3" fill="#E00020" stroke="#fff" stroke-width="0.8"/>
</svg>
<svg style="left:618px;top:579px" width="18" height="17">
<rect x="2" y="0.5" width="5" height="5" fill="#E0E0E0" stroke="#707070"/>
<path d="M0.5 5.5H8.5V12L6 15H3L0.5 12Z" fill="#707070"/>
<rect x="3.5" y="14" width="2" height="3" fill="#404040"/>
<circle cx="12" cy="11.5" r="5" fill="#109020" stroke="#fff" stroke-width="0.6"/>
<path d="M9.5 11.5L11.3 13.5L14.5 9" stroke="#fff" stroke-width="1.4" fill="none"/>
</svg>
<svg style="left:642px;top:578px" width="18" height="18">
<path d="M1 8A7 7 0 0 1 8 1M3 8A5 5 0 0 1 8 3M5 8A3 3 0 0 1 8 5" stroke="#F0F040" stroke-width="1.2" fill="none"/>
<rect x="6.5" y="5.5" width="9" height="8" fill="#20E020" stroke="#000" stroke-width="1.2"/>
<path d="M6 13.5L2 16.5H14L15.5 13.5Z" fill="#000"/>
<path d="M5 15.5H13" stroke="#808080"/>
</svg>
<svg style="left:667px;top:579px" width="16" height="16">
<rect x="0.5" y="0.5" width="15" height="15" rx="1.5" fill="#E86818" stroke="#B04808"/>
<path d="M4 11.5H12M5 13.5H11M6 9.5H10M7 3L9 5L7 7" stroke="#fff" stroke-width="1" fill="none"/>
<path d="M11 8.5A2 2 0 0 1 11 11.5" stroke="#fff" fill="none"/>
</svg>
<svg style="left:690px;top:579px" width="17" height="16">
<path d="M1 5.5H4L9 1.5V14.5L4 10.5H1Z" fill="#E07050" stroke="#000" stroke-width="1.2"/>
<path d="M11 5A4 4 0 0 1 11 11M13.5 3A7 7 0 0 1 13.5 13" stroke="#404040" stroke-width="1" fill="none"/>
</svg>
<svg style="left:716px;top:579px" width="15" height="16">
<path d="M7 1L1 14H7Z" fill="#2040E0" stroke="#000080" stroke-width="0.6"/>
<path d="M6 6L3 12" stroke="#80A0FF" stroke-width="1"/>
<rect x="7" y="5" width="6" height="10" fill="#E8E8E8"/>
<path d="M13.5 4V15" stroke="#404040"/>
<rect x="9" y="14" width="2" height="1" fill="#E04040"/>
</svg>
<div class="t" style="left:745.5px;top:581px;font-size:11.5px">11:08</div>
<svg style="left:781px;top:581px" width="15" height="12">
<defs><linearGradient id="mon" x1="0" y1="0" x2="1" y2="1"><stop offset="0" stop-color="#2060C8"/><stop offset="1" stop-color="#60A0F0"/></linearGradient></defs>
<rect x="0" y="0" width="15" height="12" fill="url(#mon)"/>
<rect x="0" y="9" width="15" height="3" fill="#202840"/>
<circle cx="3" cy="9.5" r="1.5" fill="#80D0F0"/>
</svg>

</body></html>
